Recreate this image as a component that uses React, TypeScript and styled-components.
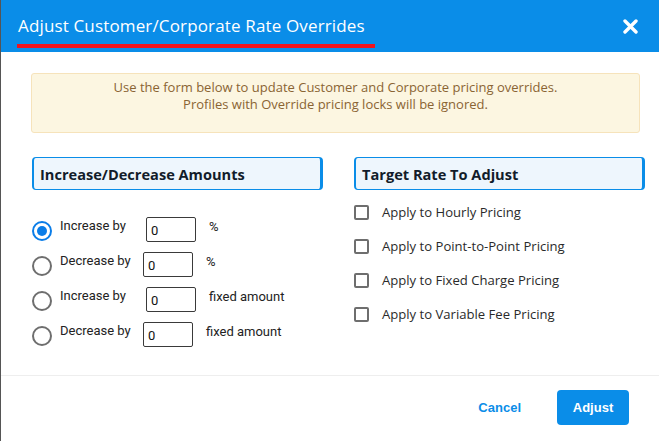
import React from 'react';
import styled, { createGlobalStyle } from 'styled-components';

const GlobalStyle = createGlobalStyle`
  html, body {
    margin: 0;
    padding: 0;
    background: #ffffff;
  }
  * {
    box-sizing: border-box;
  }
`;

const Modal = styled.div`
  width: 659px;
  height: 441px;
  background: #ffffff;
  display: flex;
  flex-direction: column;
  border-left: 1px solid #555;
  font-family: 'Open Sans', 'Liberation Sans', sans-serif;
`;

const Header = styled.header`
  height: 52px;
  background: #0a8de8;
  display: flex;
  align-items: center;
  justify-content: space-between;
  padding: 0 20px 0 17px;
  position: relative;
`;

const Title = styled.h1`
  margin: 0;
  font-size: 17px;
  font-weight: 500;
  color: #ffffff;
  letter-spacing: 0.15px;
  padding-bottom: 2px;
`;

const Underline = styled.div`
  position: absolute;
  left: 16px;
  top: 44px;
  width: 358px;
  height: 4px;
  background: #f0141e;
`;

const CloseButton = styled.button`
  background: none;
  border: none;
  padding: 0;
  width: 18px;
  height: 18px;
  display: flex;
  align-items: center;
  justify-content: center;
  cursor: pointer;
`;

const Body = styled.div`
  padding: 21px 19px 0 30px;
  flex: 1;
`;

const Alert = styled.div`
  height: 60px;
  background: #fcf6e1;
  border: 1px solid #f6e3bb;
  border-radius: 3px;
  color: #8a6433;
  font-size: 13px;
  line-height: 17px;
  text-align: center;
  padding-top: 5px;
`;

const Columns = styled.div`
  display: grid;
  grid-template-columns: 291px 291px;
  column-gap: 31px;
  margin-top: 24px;
  margin-left: 1px;
`;

const Column = styled.div`
  display: flex;
  flex-direction: column;
`;

const SectionHeader = styled.div`
  height: 33px;
  background: #eef6fd;
  border: 1px solid #0a8de8;
  border-left-width: 2px;
  border-right-width: 3px;
  border-radius: 4px;
  display: flex;
  align-items: center;
  padding-left: 6px;
  font-size: 14.6px;
  font-weight: 700;
  color: #121c2a;
`;

const RadioList = styled.div`
  display: flex;
  flex-direction: column;
  gap: 10px;
  margin-top: 27px;
`;

const RadioRow = styled.label<{ $inputLeft: number }>`
  display: grid;
  grid-template-columns: 28px ${(p) => p.$inputLeft}px 50px auto;
  align-items: center;
  height: 25px;
  font-family: Roboto, 'Liberation Sans', sans-serif;
  font-size: 13px;
  color: #222;
`;

const Radio = styled.span<{ $checked?: boolean }>`
  width: 20px;
  height: 20px;
  border-radius: 50%;
  border: 2px solid ${(p) => (p.$checked ? '#0a7de8' : '#6e6e6e')};
  display: flex;
  align-items: center;
  justify-content: center;
  margin-top: 2px;
  &::after {
    content: '';
    width: 10px;
    height: 10px;
    border-radius: 50%;
    background: ${(p) => (p.$checked ? '#0a7de8' : 'transparent')};
  }
`;

const RadioText = styled.span`
  align-self: start;
  padding-top: 1px;
`;

const NumberInput = styled.input`
  width: 50px;
  height: 25px;
  border: 1px solid #3a3a3a;
  border-radius: 2px;
  padding: 2px 4px 0;
  font-family: Roboto, 'Liberation Sans', sans-serif;
  font-size: 13px;
  color: #111;
  outline: none;
`;

const Unit = styled.span<{ $offset: number }>`
  align-self: start;
  padding-top: 2px;
  padding-left: ${(p) => p.$offset}px;
`;

const CheckList = styled.div`
  display: flex;
  flex-direction: column;
  gap: 20px;
  margin-top: 15px;
`;

const CheckRow = styled.label`
  display: flex;
  align-items: center;
  gap: 13px;
  height: 14px;
  font-size: 13.1px;
  color: #2a2a2a;
`;

const Checkbox = styled.span`
  width: 15px;
  height: 15px;
  flex-shrink: 0;
  border: 2px solid #6e6e6e;
  border-radius: 2px;
`;

const Footer = styled.footer`
  height: 66px;
  border-top: 1px solid #eeeeee;
  display: flex;
  align-items: center;
  justify-content: flex-end;
  gap: 36px;
  padding-right: 30px;
  padding-bottom: 3px;
`;

const TextButton = styled.button`
  background: none;
  border: none;
  font-family: 'Liberation Sans', Arial, sans-serif;
  font-weight: 700;
  font-size: 13px;
  color: #0a8de8;
  padding: 0;
  cursor: pointer;
`;

const PrimaryButton = styled.button`
  width: 72px;
  height: 35px;
  background: #0a8de8;
  border: none;
  border-radius: 4px;
  font-family: 'Liberation Sans', Arial, sans-serif;
  font-weight: 700;
  font-size: 13px;
  color: #ffffff;
  cursor: pointer;
`;

const amounts = [
  { label: 'Increase by', unit: '%', checked: true, inputLeft: 86, unitOffset: 13 },
  { label: 'Decrease by', unit: '%', checked: false, inputLeft: 83, unitOffset: 13 },
  { label: 'Increase by', unit: 'fixed amount', checked: false, inputLeft: 86, unitOffset: 13 },
  { label: 'Decrease by', unit: 'fixed amount', checked: false, inputLeft: 83, unitOffset: 13 },
];

const targets = [
  'Apply to Hourly Pricing',
  'Apply to Point-to-Point Pricing',
  'Apply to Fixed Charge Pricing',
  'Apply to Variable Fee Pricing',
];

export default function App() {
  return (
    <>
      <GlobalStyle />
      <Modal>
        <Header>
          <Title>Adjust Customer/Corporate Rate Overrides</Title>
          <Underline />
          <CloseButton aria-label="Close">
            <svg width="15" height="15" viewBox="0 0 15 15">
              <path d="M2 2 L13 13 M13 2 L2 13" stroke="#fff" strokeWidth="3.4" strokeLinecap="round" />
            </svg>
          </CloseButton>
        </Header>
        <Body>
          <Alert>
            Use the form below to update Customer and Corporate pricing overrides.
            <br />
            Profiles with Override pricing locks will be ignored.
          </Alert>
          <Columns>
            <Column>
              <SectionHeader>Increase/Decrease Amounts</SectionHeader>
              <RadioList>
                {amounts.map((a, i) => (
                  <RadioRow key={i} $inputLeft={a.inputLeft}>
                    <Radio $checked={a.checked} />
                    <RadioText>{a.label}</RadioText>
                    <NumberInput defaultValue="0" />
                    <Unit $offset={a.unitOffset}>{a.unit}</Unit>
                  </RadioRow>
                ))}
              </RadioList>
            </Column>
            <Column>
              <SectionHeader>Target Rate To Adjust</SectionHeader>
              <CheckList>
                {targets.map((t) => (
                  <CheckRow key={t}>
                    <Checkbox />
                    {t}
                  </CheckRow>
                ))}
              </CheckList>
            </Column>
          </Columns>
        </Body>
        <Footer>
          <TextButton>Cancel</TextButton>
          <PrimaryButton>Adjust</PrimaryButton>
        </Footer>
      </Modal>
    </>
  );
}
